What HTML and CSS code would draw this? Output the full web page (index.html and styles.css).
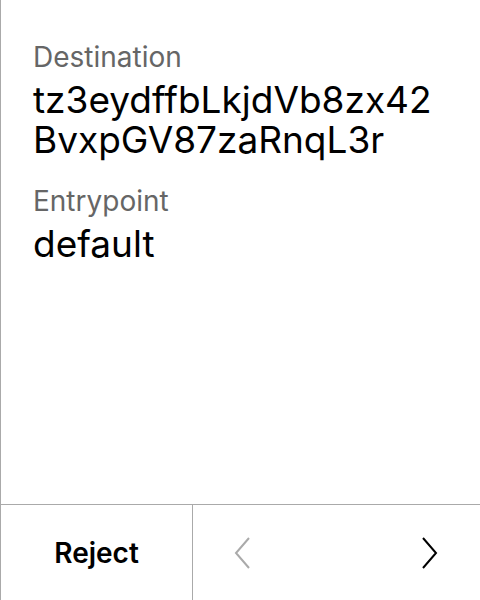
FILE: index.html
```html
<!DOCTYPE html>
<html>
<head>
<meta charset="utf-8">
<link rel="stylesheet" href="styles.css">
</head>
<body>
<div class="screen">
  <main class="content">
    <div class="field">
      <div class="label">Destination</div>
      <div class="value">tz3eydffbLkjdVb8zx42<br>BvxpGV87zaRnqL3r</div>
    </div>
    <div class="field">
      <div class="label">Entrypoint</div>
      <div class="value">default</div>
    </div>
  </main>
  <footer class="footer">
    <div class="reject">Reject</div>
    <div class="nav">
      <svg class="chev" width="20" height="32" viewBox="0 0 20 32"><path d="M16 1 L3 16 L16 31" fill="none" stroke="#aaaaaa" stroke-width="2"/></svg>
      <svg class="chev" width="20" height="32" viewBox="0 0 20 32"><path d="M4 1 L17 16 L4 31" fill="none" stroke="#000" stroke-width="2"/></svg>
    </div>
  </footer>
</div>
</body>
</html>
```
FILE: styles.css
```css
html, body {
  margin: 0;
  padding: 0;
  background: #fff;
}
.screen {
  width: 479px;
  height: 600px;
  border-left: 1px solid #aaaaaa;
  display: flex;
  flex-direction: column;
  font-family: Inter, "Noto Sans", sans-serif;
  color: #000;
}
.content {
  flex: 1;
  padding: 40px 32px 0 32px;
}
.field {
  margin-bottom: 24px;
}
.label {
  font-size: 28px;
  line-height: 34px;
  color: #666666;
}
.value {
  font-size: 37px;
  line-height: 40px;
  margin-top: 6px;
}
.footer {
  height: 95px;
  border-top: 1px solid #aaaaaa;
  display: flex;
}
.reject {
  width: 191px;
  border-right: 1px solid #aaaaaa;
  display: flex;
  align-items: center;
  justify-content: center;
  font-size: 28px;
  font-weight: 600;
}
.nav {
  flex: 1;
  display: flex;
  align-items: center;
  justify-content: space-between;
  padding: 0 41px 0 40px;
}
.chev {
  display: block;
}
```
